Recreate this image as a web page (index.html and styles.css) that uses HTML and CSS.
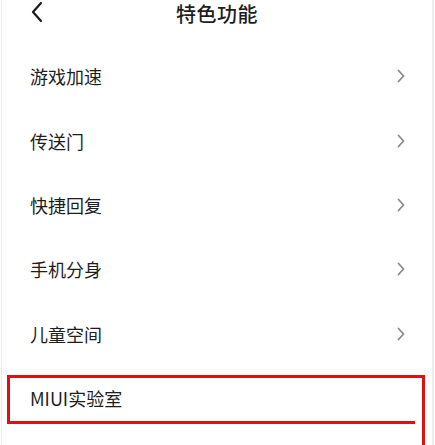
FILE: index.html
```html
<!DOCTYPE html>
<html lang="zh-CN">
<head>
<meta charset="utf-8">
<title>特色功能</title>
<link rel="stylesheet" href="styles.css">
</head>
<body>
<div class="page">
  <header class="topbar">
    <svg class="back" width="14" height="22" viewBox="0 0 14 22"><path d="M11 2 L3 11 L11 20" fill="none" stroke="#1a1a1a" stroke-width="2.2" stroke-linecap="round" stroke-linejoin="round"/></svg>
    <h1 class="title">特色功能</h1>
  </header>
  <ul class="list">
    <li class="row"><span class="label">游戏加速</span><svg class="arrow" width="8" height="14" viewBox="0 0 8 14"><path d="M1.5 1.5 L6.5 7 L1.5 12.5" fill="none" stroke="#8a8a8a" stroke-width="1.8" stroke-linecap="round" stroke-linejoin="round"/></svg></li>
    <li class="row"><span class="label">传送门</span><svg class="arrow" width="8" height="14" viewBox="0 0 8 14"><path d="M1.5 1.5 L6.5 7 L1.5 12.5" fill="none" stroke="#8a8a8a" stroke-width="1.8" stroke-linecap="round" stroke-linejoin="round"/></svg></li>
    <li class="row"><span class="label">快捷回复</span><svg class="arrow" width="8" height="14" viewBox="0 0 8 14"><path d="M1.5 1.5 L6.5 7 L1.5 12.5" fill="none" stroke="#8a8a8a" stroke-width="1.8" stroke-linecap="round" stroke-linejoin="round"/></svg></li>
    <li class="row"><span class="label">手机分身</span><svg class="arrow" width="8" height="14" viewBox="0 0 8 14"><path d="M1.5 1.5 L6.5 7 L1.5 12.5" fill="none" stroke="#8a8a8a" stroke-width="1.8" stroke-linecap="round" stroke-linejoin="round"/></svg></li>
    <li class="row"><span class="label">儿童空间</span><svg class="arrow" width="8" height="14" viewBox="0 0 8 14"><path d="M1.5 1.5 L6.5 7 L1.5 12.5" fill="none" stroke="#8a8a8a" stroke-width="1.8" stroke-linecap="round" stroke-linejoin="round"/></svg></li>
    <li class="row"><span class="label">MIUI实验室</span></li>
  </ul>
  <svg class="mark" width="435" height="445" viewBox="0 0 435 445">
    <g stroke="#e01010" stroke-width="3" fill="none">
      <line x1="7" y1="376.5" x2="425" y2="376.5"/>
      <line x1="8.5" y1="375" x2="8.5" y2="424"/>
      <line x1="7" y1="422.5" x2="415" y2="422.5"/>
      <line x1="423.5" y1="375" x2="423.5" y2="445"/>
    </g>
  </svg>
</div>
</body>
</html>
```
FILE: styles.css
```css
* { box-sizing: border-box; }
html, body { margin: 0; padding: 0; background: #fff; }
body {
  font-family: "Noto Sans CJK SC", "Noto Sans", sans-serif;
  color: #1e1e1e;
}
.page {
  position: relative;
  height: 445px;
  overflow: hidden;
  border-left: 1px solid #ececec;
  border-right: 2px solid #ececec;
  margin-left: 1px;
  width: 433px;
}
.topbar {
  position: relative;
  height: 44px;
  display: flex;
  justify-content: center;
  align-items: flex-start;
}
.back {
  position: absolute;
  left: 28px;
  top: 1px;
}
.title {
  margin: 0;
  font-size: 20px;
  font-weight: 500;
  line-height: 28px;
  letter-spacing: 0.5px;
}
.list {
  list-style: none;
  margin: 0;
  padding: 0;
}
.row {
  height: 64.4px;
  display: flex;
  align-items: center;
  justify-content: space-between;
  padding: 0 27px 0 28px;
}
.label {
  font-size: 18px;
  line-height: 24px;
}
.arrow { display: block; }
.mark {
  position: absolute;
  left: -2px;
  top: 0;
  pointer-events: none;
}
```
